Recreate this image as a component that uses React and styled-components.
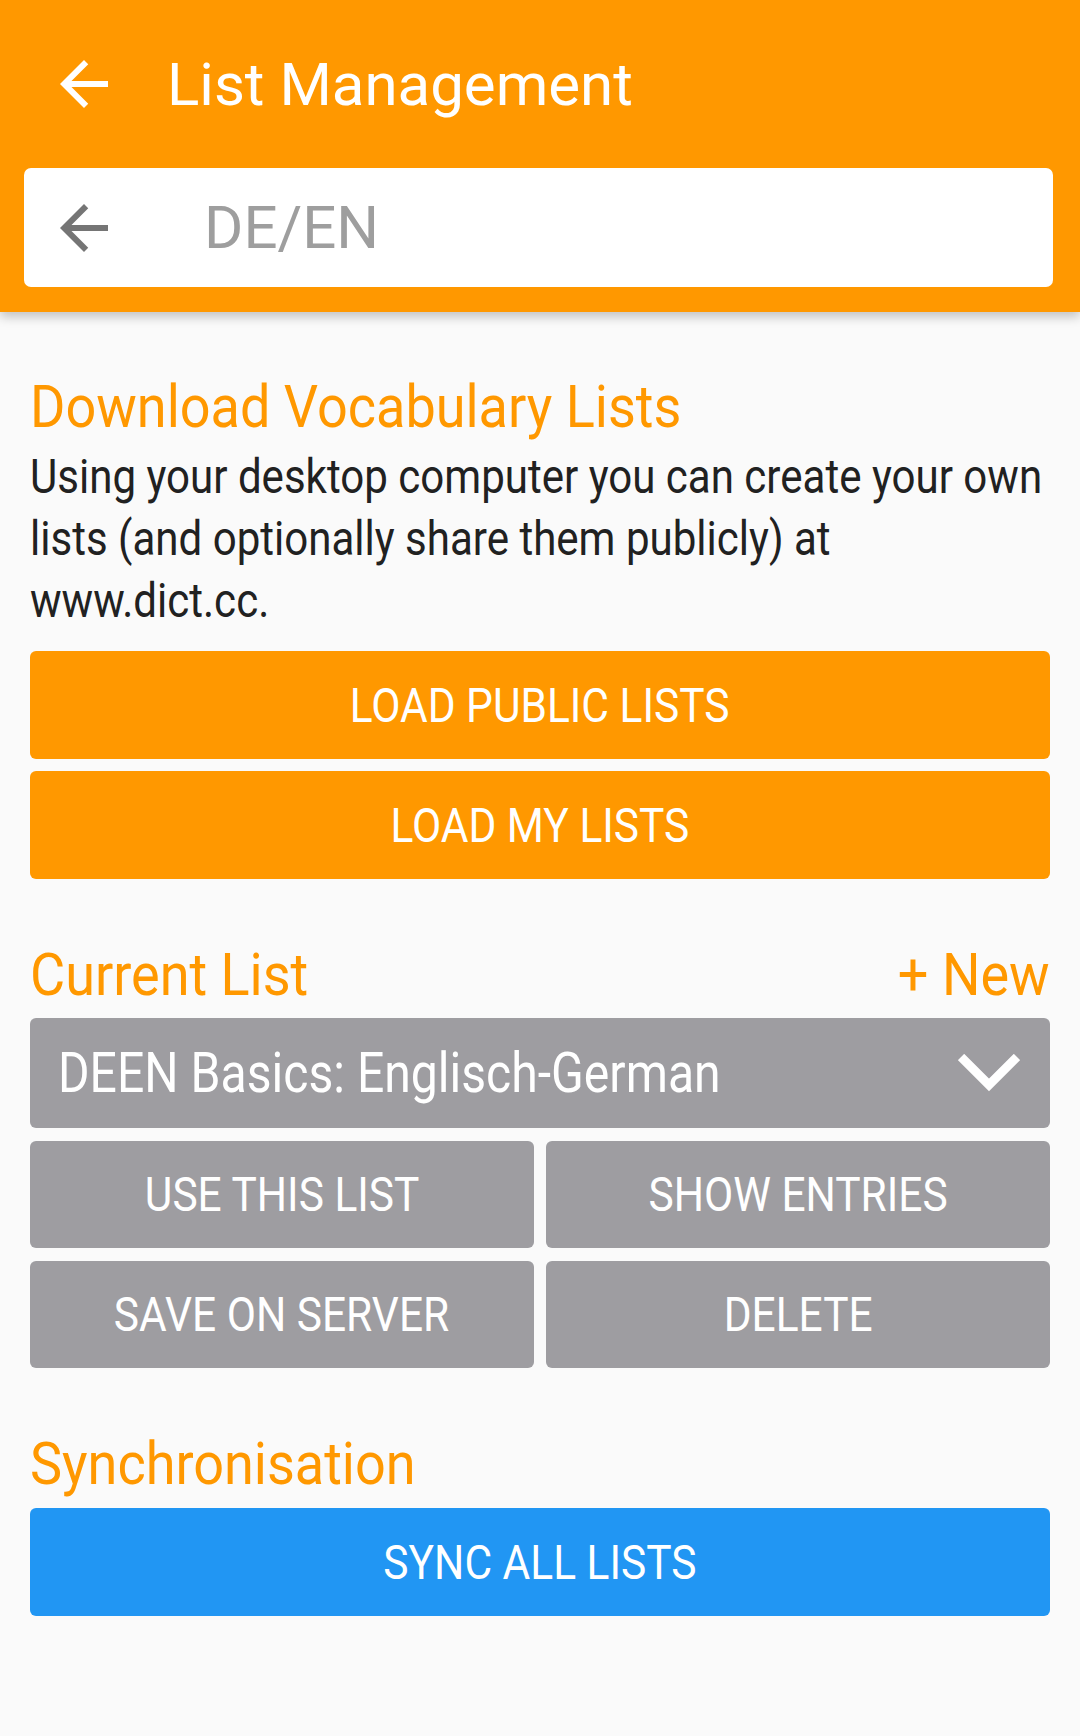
import React from 'react'
import styled, { createGlobalStyle } from 'styled-components'

const GlobalStyle = createGlobalStyle`
  body {
    margin: 0;
    background: #fafafa;
    font-family: Roboto, "Liberation Sans", sans-serif;
  }
`

const orange = '#ff9800'
const gray = '#9e9da1'
const blue = '#2196f3'
// the body text on the device is set in a condensed face
const squeeze = 0.885

const AppBar = styled.header`
  position: relative;
  z-index: 1;
  background: ${orange};
  padding-bottom: 25px;
  box-shadow: 0 5px 10px rgba(0, 0, 0, 0.22);
`

const Toolbar = styled.div`
  display: flex;
  align-items: center;
  height: 168px;
  padding-left: 48px;
`

const IconBox = styled.div`
  display: flex;
  width: 72px;
  height: 72px;
  flex-shrink: 0;
  color: ${(p) => p.color || '#fff'};

  svg {
    width: 72px;
    height: 72px;
    fill: currentColor;
  }
`

const Title = styled.h1`
  margin: 0 0 0 47px;
  font-size: 60px;
  font-weight: 400;
  color: #fff;
`

const SearchBox = styled.div`
  display: flex;
  align-items: center;
  height: 119px;
  margin: 0 27px 0 24px;
  padding-left: 24px;
  background: #fff;
  border-radius: 7px;
`

const SearchText = styled.span`
  margin-left: 84px;
  font-size: 60px;
  color: #9e9e9e;
`

const Content = styled.main`
  padding: 60px 30px 80px;
  overflow: hidden;
`

const Section = styled.section`
  & + & {
    margin-top: 61px;
  }
`

const Narrow = styled.span`
  display: inline-block;
  white-space: nowrap;
  transform: scaleX(${(p) => p.scale || squeeze});
  transform-origin: ${(p) => p.origin || 'left'} center;
`

const HeadRow = styled.div`
  display: flex;
  justify-content: space-between;
  align-items: center;
  margin-bottom: ${(p) => p.gap || 0}px;
`

const Heading = styled.h2`
  margin: 0;
  font-size: 60px;
  line-height: 70px;
  font-weight: 400;
  color: ${orange};
`

const Text = styled.p`
  width: 1190px;
  margin: 4px 0 19px;
  font-size: 48px;
  line-height: 62px;
  color: #212121;
  transform: scaleX(0.876);
  transform-origin: left top;
`

const Stack = styled.div`
  display: flex;
  flex-direction: column;
  gap: 12px;
`

const Button = styled.button`
  display: flex;
  align-items: center;
  justify-content: center;
  width: 100%;
  height: ${(p) => p.h || 108}px;
  padding: 0;
  border: none;
  border-radius: 6px;
  background: ${(p) => p.bg || gray};
  color: #fff;
  font-family: inherit;
  font-size: 48px;
  text-transform: uppercase;
`

const Dropdown = styled.div`
  display: flex;
  align-items: center;
  justify-content: space-between;
  height: 110px;
  padding: 0 30px 0 28px;
  border-radius: 6px;
  background: ${gray};
  color: #fff;
  font-size: 55px;
`

const ButtonGrid = styled.div`
  display: grid;
  grid-template-columns: 1fr 1fr;
  gap: 13px 12px;
  margin-top: 13px;
`

const ArrowBack = () => (
  <svg viewBox="0 0 24 24">
    <path d="M20 11H7.83l5.59-5.59L12 4l-8 8 8 8 1.41-1.41L7.83 13H20v-2z" />
  </svg>
)

const Chevron = () => (
  <svg width="62" height="38" viewBox="0 0 62 38">
    <polyline points="3,3 31,31 59,3" fill="none" stroke="#fff" strokeWidth="9" />
  </svg>
)

const Label = ({ children }) => <Narrow origin="center">{children}</Narrow>

const HeadText = ({ children, right }) => (
  <Heading>
    <Narrow scale={0.9} origin={right ? 'right' : 'left'}>
      {children}
    </Narrow>
  </Heading>
)

const App = () => {
  return (
    <>
      <GlobalStyle />
      <AppBar>
        <Toolbar>
          <IconBox>
            <ArrowBack />
          </IconBox>
          <Title>List Management</Title>
        </Toolbar>
        <SearchBox>
          <IconBox color="#757575">
            <ArrowBack />
          </IconBox>
          <SearchText>DE/EN</SearchText>
        </SearchBox>
      </AppBar>
      <Content>
        <Section>
          <HeadText>Download Vocabulary Lists</HeadText>
          <Text>
            Using your desktop computer you can create your own lists (and
            optionally share them publicly) at www.dict.cc.
          </Text>
          <Stack>
            <Button bg={orange}>
              <Label>Load public lists</Label>
            </Button>
            <Button bg={orange}>
              <Label>Load my lists</Label>
            </Button>
          </Stack>
        </Section>
        <Section>
          <HeadRow gap={8}>
            <HeadText>Current List</HeadText>
            <HeadText right>+ New</HeadText>
          </HeadRow>
          <Dropdown>
            <Narrow scale={0.875}>DEEN Basics: Englisch-German</Narrow>
            <Chevron />
          </Dropdown>
          <ButtonGrid>
            <Button h={107}>
              <Label>Use this list</Label>
            </Button>
            <Button h={107}>
              <Label>Show entries</Label>
            </Button>
            <Button h={107}>
              <Label>Save on server</Label>
            </Button>
            <Button h={107}>
              <Label>Delete</Label>
            </Button>
          </ButtonGrid>
        </Section>
        <Section>
          <HeadRow gap={9}>
            <HeadText>Synchronisation</HeadText>
          </HeadRow>
          <Button bg={blue}>
            <Label>Sync all lists</Label>
          </Button>
        </Section>
      </Content>
    </>
  )
}

export default App
